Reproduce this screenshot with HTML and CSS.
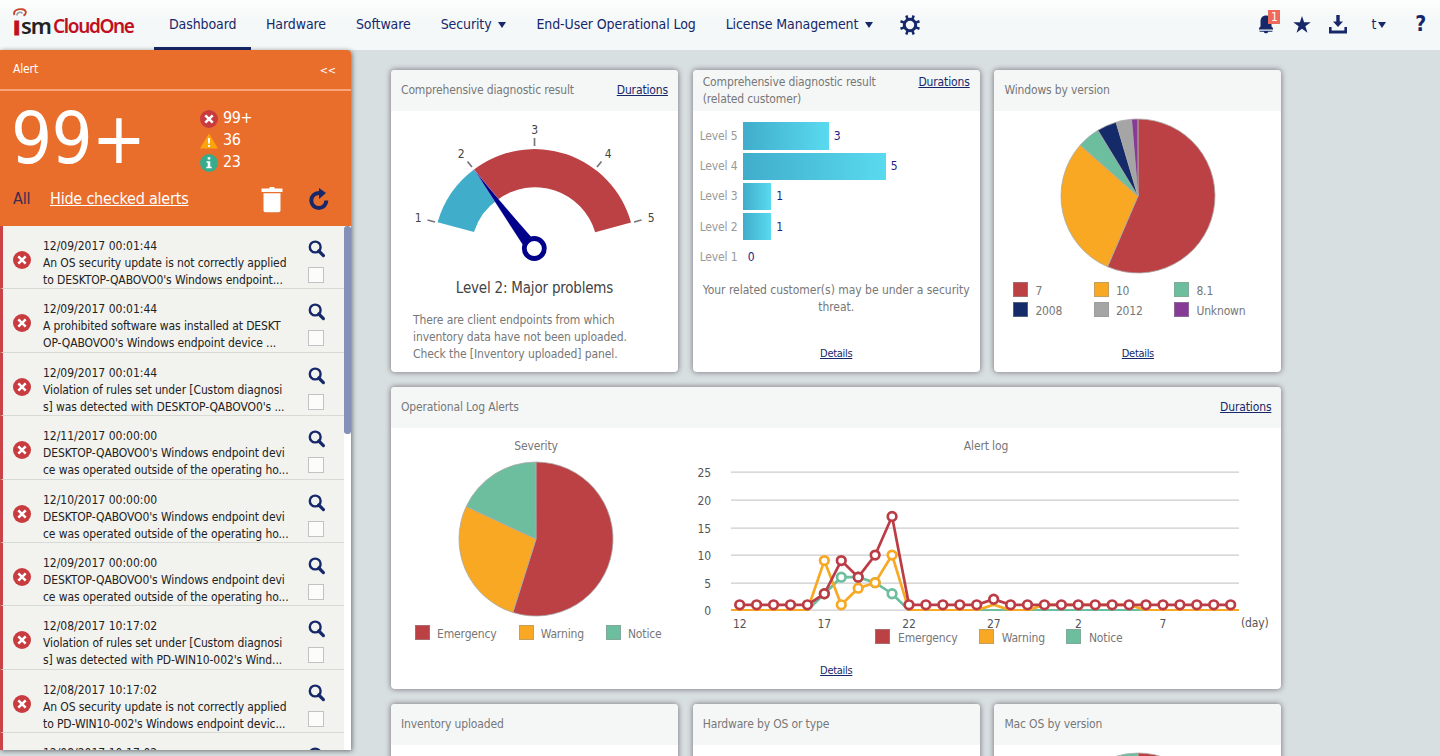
FILE: index.html
```
<!DOCTYPE html>
<html>
  <head>
    <meta charset="utf-8">
    <title>ISM CloudOne</title>
    <link rel="stylesheet" href="styles.css">
  </head>
  <body>
    <!-- Shared icons -->
    <svg class="defs" width="0" height="0">
      <symbol id="icon-error" viewBox="0 0 18 18">
        <circle cx="9" cy="9" r="9" fill="#c83c40"/>
        <path d="M5.3 5.3l7.4 7.4M12.7 5.3l-7.4 7.4" stroke="#fff" stroke-width="2.5"/>
      </symbol>
      <symbol id="icon-search" viewBox="0 0 18 18">
        <circle cx="7.2" cy="7" r="5.4" fill="none" stroke="#16286a" stroke-width="2.4"/>
        <path d="M10.8 11l4.6 4.6" stroke="#16286a" stroke-width="3.2" stroke-linecap="round"/>
      </symbol>
    </svg>

    <header class="topbar">
      <div class="logo">
        <svg width="15" height="12" viewBox="0 0 15 12">
          <path d="M1.500 7C-.5 2.500 5 .8 9 1.200c4 .5 5.500 4 1.500 6.400" fill="none" stroke="#c8472f" stroke-width="1.9"/>
          <path d="M4 7.500C3.500 4.500 8 3 9.500 5.500" fill="none" stroke="#8d9aa3" stroke-width="1.5"/>
        </svg>
        <span class="logo-i">ı</span><span class="logo-sm">sm</span><span class="logo-name">CloudOne</span>
      </div>
      <nav class="menu">
        <a class="active">Dashboard</a>
        <a>Hardware</a>
        <a>Software</a>
        <a>Security <i class="caret"></i></a>
        <a>End-User Operational Log</a>
        <a>License Management <i class="caret"></i></a>
        <a class="gear">
          <svg width="22" height="22" viewBox="0 0 22 22">
            <circle cx="11" cy="11" r="5.700" fill="none" stroke="#16286a" stroke-width="3"/>
            <path d="M8.900 6L7.300 1.500M13.100 6L14.700 1.500M8.900 16L7.300 20.500M13.100 16L14.700 20.500M6 8.900L1.500 7.300M6 13.100L1.500 14.700M16 8.900L20.500 7.300M16 13.100L20.500 14.700" stroke="#16286a" stroke-width="2.500"/>
          </svg>
        </a>
      </nav>
      <div class="tools">
        <div class="bell">
          <svg width="16" height="20" viewBox="0 0 16 20">
            <path d="M1 15.500V14l1.500-1.500V7.500C2.500 3.500 5 1.500 8 1.500s5.500 2 5.500 6v5L15 14v1.500z" fill="#16286a"/>
            <path d="M1 16.800h14l-1 1H10.300c-.8 2-3.800 2-4.600 0H2z" fill="#16286a"/>
          </svg>
          <span class="badge">1</span>
        </div>
        <svg class="star" width="18" height="17" viewBox="0 0 18 17"><path d="M9 0l2.100 6.300h6.700l-5.400 3.900 2.100 6.500L9 12.700l-5.500 4 2.100-6.500L.2 6.300h6.700z" fill="#16286a"/></svg>
        <svg class="download" width="20" height="19" viewBox="0 0 20 19"><path d="M8.300 0h3.400v6.500H15l-5 5.500-5-5.500h3.300zM1 12h2.600v3.500h12.800V12H19v6.500H1z" fill="#16286a"/></svg>
        <span class="user">t<i class="caret"></i></span>
        <span class="help">?</span>
      </div>
    </header>

    <aside class="alerts">
      <div class="alerts-title"><span>Alert</span><span class="collapse">&lt;&lt;</span></div>
      <div class="summary">
        <div class="counts">
          <div class="total">99+</div>
          <ul class="levels">
            <li><svg width="18" height="18"><use href="#icon-error"/></svg>99+</li>
            <li>
              <svg width="18" height="18" viewBox="0 0 18 18"><path d="M9 1.500L18 16.500H0z" fill="#fba50b"/><path d="M9 6v5.500M9 13v2" stroke="#fff" stroke-width="2"/></svg>36
            </li>
            <li>
              <svg width="18" height="18" viewBox="0 0 18 18"><circle cx="9" cy="9" r="9" fill="#36ac8c"/><path d="M7.700 3.300h2.600v2.200H7.700zM6.500 7.200h3.800v5.600h1.400v1.500H6.300v-1.500h1.400V8.700H6.500z" fill="#fff"/></svg>23
            </li>
          </ul>
        </div>
        <div class="actions">
          <span class="all">All</span>
          <a class="hide-link">Hide checked alerts</a>
          <svg class="trash" width="22" height="26" viewBox="0 0 22 26"><path d="M8 1.500L9 0h4l1 1.500h7.500V5H.5V1.500zM2.500 6.300h17V23.500q0 1.800-1.800 1.800H4.300q-1.800 0-1.800-1.800z" fill="#fff"/></svg>
          <svg class="reload" width="22" height="24" viewBox="0 0 22 24"><path d="M18.300 13.500A7.500 7.500 0 1 1 10.800 6h3" fill="none" stroke="#16286a" stroke-width="4"/><path d="M11 1l7 5-7 6z" fill="#16286a"/></svg>
        </div>
      </div>
      <div class="list-wrap">
        <ul class="list" id="alertList"></ul>
        <div class="scrollbar"><div class="thumb"></div></div>
      </div>
    </aside>

    <main class="dashboard">
      <section class="card">
        <div class="card-head"><h3>Comprehensive diagnostic result</h3><a>Durations</a></div>
        <svg class="gauge" width="287" height="160" viewBox="391 110 287 160">
          <path d="M437.600 222.300A100 100 0 0 1 474 169.500L497.600 199.800A61.500 61.500 0 0 0 474 232z" fill="#40adcb"/>
          <path d="M474 169.500A100 100 0 0 1 631 222.600L595.200 232.300A62.500 62.500 0 0 0 497.600 199.800z" fill="#bc4145"/>
          <path d="M534.500 138v8M467.500 161.500l4.500 5.500M601.500 161.500l-4.500 5.500M427.500 220l7.500 2M641.500 220l-7.500 2" stroke="#777" stroke-width="1.700"/>
          <path d="M474 169.500L532 239.500L522.500 244z" fill="#00008b" stroke="#a9a3d8" stroke-width=".6"/>
          <path d="M482 181L533 239L523.500 245.500z" fill="#00008b"/>
          <circle cx="534.300" cy="248.500" r="10" fill="#fff" stroke="#00008b" stroke-width="4.800"/>
          <g class="axis" text-anchor="middle">
            <text x="418" y="222">1</text>
            <text x="461" y="158">2</text>
            <text x="534.500" y="134">3</text>
            <text x="608" y="158">4</text>
            <text x="651" y="222">5</text>
          </g>
        </svg>
        <p class="level">Level 2: Major problems</p>
        <p class="advice">There are client endpoints from which<br>inventory data have not been uploaded.<br>Check the [Inventory uploaded] panel.</p>
      </section>

      <section class="card">
        <div class="card-head two-line"><h3>Comprehensive diagnostic result<br>(related customer)</h3><a>Durations</a></div>
        <div class="bars">
          <div class="bar-row"><span>Level 5</span><div class="bar" style="width: 86px"></div><b>3</b></div>
          <div class="bar-row"><span>Level 4</span><div class="bar" style="width: 143px"></div><b>5</b></div>
          <div class="bar-row"><span>Level 3</span><div class="bar" style="width: 28.500px"></div><b>1</b></div>
          <div class="bar-row"><span>Level 2</span><div class="bar" style="width: 28.500px"></div><b>1</b></div>
          <div class="bar-row"><span>Level 1</span><div class="bar" style="width: 0"></div><b>0</b></div>
        </div>
        <p class="threat">Your related customer(s) may be under a security threat.</p>
        <a class="details">Details</a>
      </section>

      <section class="card">
        <div class="card-head"><h3>Windows by version</h3></div>
        <svg class="pie" id="windowsPie" width="158" height="158" viewBox="-79 -79 158 158"></svg>
        <ul class="legend legend-grid">
          <li><i class="red"></i>7</li>
          <li><i class="orange"></i>10</li>
          <li><i class="green"></i>8.1</li>
          <li><i class="navy"></i>2008</li>
          <li><i class="gray"></i>2012</li>
          <li><i class="purple"></i>Unknown</li>
        </ul>
        <a class="details">Details</a>
      </section>

      <section class="card wide">
        <div class="card-head"><h3>Operational Log Alerts</h3><a>Durations</a></div>
        <div class="log-body">
          <div class="severity">
            <h4>Severity</h4>
            <svg class="pie" id="severityPie" width="158" height="158" viewBox="-79 -79 158 158"></svg>
            <ul class="legend">
              <li><i class="red"></i>Emergency</li>
              <li><i class="orange"></i>Warning</li>
              <li><i class="green"></i>Notice</li>
            </ul>
          </div>
          <div class="alert-log">
            <h4>Alert log</h4>
            <svg id="logChart" width="600" height="176" viewBox="681 456 600 176"></svg>
            <ul class="legend">
              <li><i class="red"></i>Emergency</li>
              <li><i class="orange"></i>Warning</li>
              <li><i class="green"></i>Notice</li>
            </ul>
          </div>
        </div>
        <a class="details">Details</a>
      </section>

      <section class="card"><div class="card-head"><h3>Inventory uploaded</h3></div></section>
      <section class="card"><div class="card-head"><h3>Hardware by OS or type</h3></div></section>
      <section class="card">
        <div class="card-head"><h3>Mac OS by version</h3></div>
        <svg class="pie" id="macPie" width="158" height="158" viewBox="-79 -79 158 158"></svg>
      </section>
    </main>

    <script src="script.js"></script>
  </body>
</html>
```
FILE: styles.css
```
* {
  box-sizing: border-box;
}

body {
  margin: 0;
  height: 756px;
  overflow: hidden;
  background: #d8dfe1;
  font-family: "DejaVu Sans Condensed", "DejaVu Sans", sans-serif;
  font-stretch: condensed;
  font-size: 12px;
  letter-spacing: -0.14px;
  color: #16286a;
  display: grid;
  grid-template-columns: 351px 1fr;
  grid-template-rows: 50px 706px;
}

ul {
  list-style: none;
  margin: 0;
  padding: 0;
}

h3,
h4,
p {
  margin: 0;
  font-size: 12px;
  font-weight: normal;
}

svg {
  display: block;
  flex: none;
}

.defs {
  position: absolute;
}

/* Top bar */
.topbar {
  grid-column: 1 / 3;
  display: flex;
  background: linear-gradient(#fdfefe, #f5f8f8 20px);
}

.logo {
  width: 154px;
  height: 50px;
  padding: 8px 0 0 13px;
  font-family: "Noto Sans", sans-serif;
  font-stretch: normal;
  font-weight: bold;
  line-height: 20px;
  white-space: nowrap;
  letter-spacing: 0;
}

.logo svg {
  margin-bottom: -4px;
}

.logo span {
  display: inline-block;
  vertical-align: top;
}

.logo-i {
  width: 8px;
  font-size: 25px;
  line-height: 18px;
  color: #c00f1f;
  -webkit-text-stroke: 1px #c00f1f;
}

.logo-sm {
  width: 32px;
  font-size: 22px;
  font-weight: 600;
  line-height: 19px;
  letter-spacing: -1px;
  color: #222;
}

.logo-name {
  font-size: 19px;
  font-weight: 600;
  letter-spacing: -1.35px;
  line-height: 21px;
  color: #c00f1f;
}

.menu {
  display: flex;
}

.menu a {
  height: 50px;
  padding: 0 15px;
  font-size: 14px;
  line-height: 48px;
  white-space: nowrap;
  letter-spacing: -0.1px;
}

.menu .active {
  width: 97px;
  border-bottom: 3px solid #16286a;
}

.menu .gear {
  padding: 14px 0 0 11px;
}

.caret {
  display: inline-block;
  border: 4.5px solid transparent;
  border-top: 6px solid #16286a;
  border-bottom: 0;
  vertical-align: 1px;
}

.menu .caret {
  margin-left: 3px;
}

.tools {
  margin-left: auto;
  display: flex;
  align-items: center;
  padding: 0 14px 2px 0;
}

.bell {
  position: relative;
  margin-right: 19px;
}

.badge {
  position: absolute;
  left: 10px;
  top: -4px;
  width: 12px;
  height: 14px;
  background: #ef6a5b;
  color: #fff;
  line-height: 14px;
  text-align: center;
}

.star {
  margin-right: 17px;
}

.download {
  margin-right: 23px;
}

.user {
  font-size: 14px;
  margin-right: 29px;
}

.user .caret {
  margin-left: 2px;
}

.help {
  font-size: 21px;
  font-weight: bold;
}

/* Alert panel */
.alerts {
  height: 700px;
  display: flex;
  flex-direction: column;
  box-shadow: 1px 1px 5px rgba(0, 0, 0, 0.5);
  border-radius: 0 4px 0 0;
  overflow: hidden;
}

.alerts-title {
  height: 41px;
  padding: 0 15px 0 13px;
  display: flex;
  justify-content: space-between;
  line-height: 38px;
  background: #e96d2b;
  border-bottom: 2px solid #f7a67c;
  color: #fff;
}

.collapse {
  font-size: 11px;
  line-height: 41px;
}

.summary {
  height: 135px;
  background: #e96d2b;
  color: #fff;
}

.counts {
  display: flex;
  height: 82px;
}

.total {
  width: 200px;
  padding-left: 11px;
  font-size: 72px;
  line-height: 94px;
  letter-spacing: -0.8px;
}

.levels {
  padding-top: 16px;
  font-size: 16px;
  letter-spacing: -0.4px;
}

.levels li {
  display: flex;
  gap: 5px;
  height: 22px;
  line-height: 22px;
}

.levels svg {
  margin-top: 3px;
}

.actions {
  display: flex;
  align-items: center;
  height: 50px;
  padding: 0 21px 0 13px;
  font-size: 16px;
  letter-spacing: -0.2px;
}

.all {
  width: 37px;
  color: #3b2c50;
}

.hide-link {
  text-decoration: underline;
}

.trash {
  margin: 4px 25px 0 auto;
}

.reload {
  margin-top: 1px;
}

.list-wrap {
  flex: 1;
  min-height: 0;
  display: flex;
  background: #fff;
}

.list {
  flex: 1;
  overflow: hidden;
}

.alert {
  height: 63.4px;
  display: flex;
  border-left: 3px solid #cb4349;
  border-bottom: 1px solid #d8dad6;
  background: #f2f2ef;
  color: #222;
  letter-spacing: -0.1px;
}

.alert > svg {
  margin: 25px 12px 0 10px;
}

.message {
  width: 265px;
  padding-top: 12px;
  line-height: 17px;
  white-space: nowrap;
}

.message span {
  display: block;
}

.message span:first-child {
  letter-spacing: 0;
}

.check svg {
  margin-top: 14px;
}

.box {
  width: 16px;
  height: 16px;
  margin-top: 9px;
  border: 1px solid #c2c2c4;
  background: #fcfcfa;
}

.scrollbar {
  width: 7px;
}

.thumb {
  height: 208px;
  border-radius: 3px;
  background: #8490b5;
}

/* Dashboard cards */
.dashboard {
  display: grid;
  grid-template-columns: repeat(3, 287px);
  grid-auto-rows: 302px;
  gap: 15px 14.7px;
  padding: 20px 0 0 40px;
  overflow: hidden;
}

.card {
  display: flex;
  flex-direction: column;
  align-items: center;
  background: #fff;
  border-radius: 4px;
  box-shadow: 0 0 5px 1px rgba(90, 80, 90, 0.6);
  overflow: hidden;
  color: #777;
}

.wide {
  grid-column: 1 / 4;
}

.card-head {
  align-self: stretch;
  height: 41px;
  flex: none;
  display: flex;
  justify-content: space-between;
  padding: 0 10px;
  line-height: 40px;
  background: #f5f7f7;
}

.two-line {
  line-height: 17px;
  padding-top: 4px;
}

.card a {
  color: #16286a;
  text-decoration: underline;
}

.gauge {
  margin-top: -1px;
}

.axis {
  font-size: 12px;
  fill: #444;
}

.level {
  margin-top: 8px;
  font-size: 15px;
  line-height: 20px;
  letter-spacing: -0.2px;
  color: #444;
}

.advice {
  align-self: flex-start;
  margin: 14px 0 0 22px;
  line-height: 17px;
  letter-spacing: -0.1px;
}

.bars {
  align-self: stretch;
  height: 161px;
  padding: 10px 0 0 6px;
}

.bar-row {
  display: flex;
  align-items: center;
  height: 30.2px;
}

.bar-row span {
  width: 44px;
  padding-left: 1px;
  white-space: nowrap;
  color: #999;
}

.bar {
  height: 27.5px;
  background: linear-gradient(90deg, #40adcb, #59daef);
}

.bar-row b {
  margin-left: 5px;
  font-weight: normal;
  color: #221c87;
}

.threat {
  width: 280px;
  margin-top: 10px;
  line-height: 17px;
  letter-spacing: -0.03px;
  text-align: center;
}

.details {
  margin-top: auto;
  padding-bottom: 10px;
  font-size: 11px;
  line-height: 17px;
  letter-spacing: -0.3px;
}

.pie {
  margin-top: 6px;
}

.legend {
  display: flex;
  line-height: 19px;
}

.legend li {
  display: flex;
  gap: 7px;
}

.legend i {
  width: 15px;
  height: 15px;
  border: 1px solid rgba(150, 150, 150, 0.5);
}

.legend-grid {
  align-self: stretch;
  display: grid;
  grid-template-columns: 80.5px 80.5px 100px;
  grid-auto-rows: 20px;
  margin: 7px 0 0 19px;
}

.red {
  background: #bc4145;
}

.orange {
  background: #f8a823;
}

.green {
  background: #6dbe9f;
}

.navy {
  background: #152a68;
}

.gray {
  background: #a5a5a5;
}

.purple {
  background: #863b97;
}

/* Operational log */
.log-body {
  align-self: stretch;
  display: flex;
}

.log-body h4 {
  height: 28px;
  line-height: 37px;
  text-align: center;
}

.severity {
  width: 290px;
}

.severity .pie {
  margin: 4px auto 0;
}

.severity .legend {
  gap: 22px;
  padding: 7px 0 0 24px;
}

.alert-log {
  width: 600px;
}

.alert-log h4 {
  padding-left: 10px;
}

.alert-log .legend {
  gap: 21px;
  margin-top: -3px;
  padding-left: 194px;
}

.alert-log .legend li {
  gap: 8px;
}

#logChart text {
  font-size: 12px;
  fill: #555;
}
```
FILE: script.js
```
const alerts = [
  ["12/09/2017 00:01:44", "An OS security update is not correctly applied", "to DESKTOP-QABOVO0's Windows endpoint..."],
  ["12/09/2017 00:01:44", "A prohibited software was installed at DESKT", "OP-QABOVO0's Windows endpoint device ..."],
  ["12/09/2017 00:01:44", "Violation of rules set under [Custom diagnosi", "s] was detected with DESKTOP-QABOVO0's ..."],
  ["12/11/2017 00:00:00", "DESKTOP-QABOVO0's Windows endpoint devi", "ce was operated outside of the operating ho..."],
  ["12/10/2017 00:00:00", "DESKTOP-QABOVO0's Windows endpoint devi", "ce was operated outside of the operating ho..."],
  ["12/09/2017 00:00:00", "DESKTOP-QABOVO0's Windows endpoint devi", "ce was operated outside of the operating ho..."],
  ["12/08/2017 10:17:02", "Violation of rules set under [Custom diagnosi", "s] was detected with PD-WIN10-002's Wind..."],
  ["12/08/2017 10:17:02", "An OS security update is not correctly applied", "to PD-WIN10-002's Windows endpoint devic..."],
  ["12/08/2017 10:17:02", "", ""],
];

document.getElementById("alertList").innerHTML = alerts
  .map(
    (lines) => `
    <li class="alert">
      <svg width="18" height="18"><use href="#icon-error"/></svg>
      <div class="message">${lines.map((line) => `<span>${line}</span>`).join("")}</div>
      <div class="check">
        <svg width="18" height="18"><use href="#icon-search"/></svg>
        <div class="box"></div>
      </div>
    </li>`
  )
  .join("");

// Each slice is [end angle in degrees, color], clockwise from the top
function drawPie(id, slices) {
  const r = 77;
  const point = (deg) => {
    const rad = (deg * Math.PI) / 180;
    return `${r * Math.sin(rad)} ${-r * Math.cos(rad)}`;
  };
  let start = 0;
  let html = "";
  slices.forEach(([end, color]) => {
    const large = end - start > 180 ? 1 : 0;
    html += `<path d="M0 0L${point(start)}A${r} ${r} 0 ${large} 1 ${point(end)}z" fill="${color}" stroke="#aaa" stroke-width=".8"/>`;
    start = end;
  });
  document.getElementById(id).innerHTML = html;
}

drawPie("windowsPie", [
  [203.3, "#bc4145"],
  [311.4, "#f8a823"],
  [328.6, "#6dbe9f"],
  [343.5, "#152a68"],
  [355.2, "#a5a5a5"],
  [359.9, "#863b97"],
]);
drawPie("severityPie", [
  [197.5, "#bc4145"],
  [295, "#f8a823"],
  [359.9, "#6dbe9f"],
]);
drawPie("macPie", [
  [200, "#bc4145"],
  [359.9, "#6dbe9f"],
]);

// Alert log line chart
const series = [
  ["#6dbe9f", [0, 0, 0, 0, 0, 3, 6, 6, 5, 3, 0, 0, 0, 0, 0, 0, 0, 0, 0, 0, 0, 0, 0, 0, 0, 0, 0, 0, 0, 0]],
  ["#f8a823", [0, 0, 0, 0, 0, 9, 1, 4, 5, 10, 0, 0, 0, 0, 0, 1, 0, 0, 1, 1, 1, 1, 1, 1, 0, 0, 0, 0, 0, 0]],
  ["#bc3c46", [1, 1, 1, 1, 1, 3, 9, 6, 10, 17, 1, 1, 1, 1, 1, 2, 1, 1, 1, 1, 1, 1, 1, 1, 1, 1, 1, 1, 1, 1]],
];
const xPos = (i) => 739.7 + i * 16.93;
const yPos = (v) => 610.3 - v * 5.52;

let chart = "";
for (let v = 0; v <= 25; v += 5) {
  const y = Math.round(yPos(v)) + 0.2;
  chart += `<path d="M731 ${y}H1239" stroke="#ccc" stroke-width="1.3"/>`;
  chart += `<text x="711" y="${y + 5}" text-anchor="end">${v}</text>`;
}
["12", "17", "22", "27", "2", "7"].forEach((day, i) => {
  chart += `<text x="${xPos(i * 5)}" y="628" text-anchor="middle">${day}</text>`;
});
chart += `<text x="1241" y="627">(day)</text>`;
chart += `<clipPath id="plot"><path d="M731 460h508v151H731z"/></clipPath>`;
series.forEach(([color, values]) => {
  const points = values.map((v, i) => `${xPos(i)},${yPos(v)}`).join(" ");
  const first = values[0];
  const last = values[values.length - 1];
  chart += `<g fill="none" stroke="${color}" stroke-width="2.700">`;
  chart += `<polyline clip-path="url(#plot)" points="${first ? "" : "731," + yPos(0)} ${points} ${last ? "" : "1239," + yPos(0)}"/>`;
  values.forEach((v, i) => {
    // single low warnings are drawn without a marker
    if (v > 1 || (v === 1 && (i < 10 || color === "#bc3c46"))) {
      chart += `<circle cx="${xPos(i)}" cy="${yPos(v)}" r="4.300" fill="#fff"/>`;
    }
  });
  chart += `</g>`;
});
document.getElementById("logChart").innerHTML = chart;
```
